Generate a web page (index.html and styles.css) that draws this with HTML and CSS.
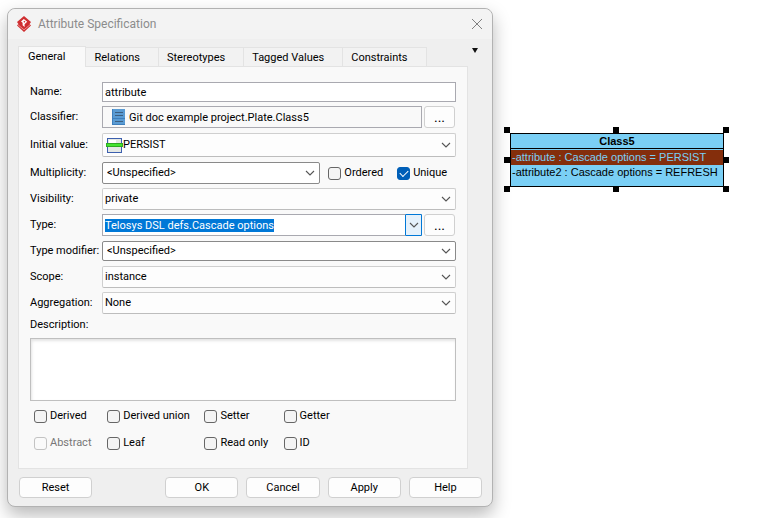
FILE: index.html
```html
<!DOCTYPE html>
<html lang="en">
<head>
<meta charset="utf-8">
<title>Attribute Specification</title>
<link rel="stylesheet" href="styles.css">
</head>
<body>
<svg class="defs" aria-hidden="true">
  <symbol id="chevron" viewBox="0 0 10 6"><path d="M1 1 L5 5 L9 1" fill="none" stroke="#555" stroke-width="1.1"/></symbol>
</svg>
<main class="workspace">
  <section class="dialog" role="dialog" aria-labelledby="dialog-title">
    <header class="titlebar">
      <svg class="app-icon" viewBox="0 0 14 16" aria-hidden="true">
        <path d="M7 0 L14 6 L12.6 8 L14 9.6 L7 16 L0 9.6 L1.4 8 L0 6 Z" fill="#cf2f31"/>
        <path d="M1 8.8 L7 13.8 L13 8.8" fill="none" stroke="#f3b5b5" stroke-width="0.7"/>
        <path d="M4 5.4 L6.8 3 L10.2 5.8 L7.6 8.2 L7.6 11 L5.6 9.2 L5.6 6.8 Z" fill="#fff"/>
        <path d="M6.4 5.8 L7.4 4.8 L8.4 5.8 L7.4 6.8 Z" fill="#cf2f31"/>
      </svg>
      <h1 id="dialog-title" class="title">Attribute Specification</h1>
      <button class="close" type="button" aria-label="Close"><svg viewBox="0 0 10 10"><path d="M0 0 L10 10 M10 0 L0 10" stroke="#808080" fill="none"/></svg></button>
    </header>
    <form class="content">
      <nav class="tabs">
        <button type="button" class="tab tab-active">General</button>
        <button type="button" class="tab">Relations</button>
        <button type="button" class="tab">Stereotypes</button>
        <button type="button" class="tab">Tagged Values</button>
        <button type="button" class="tab">Constraints</button>
        <button type="button" class="tab-menu" aria-label="Tab list"><svg viewBox="0 0 6 5"><path d="M0 0 H6 L3 5 Z" fill="#111"/></svg></button>
      </nav>
      <div class="panel">
        <div class="fields">
          <label for="name">Name:</label>
          <input id="name" class="box short" type="text" value="attribute">

          <label for="classifier">Classifier:</label>
          <div class="line">
            <span class="picker">
              <svg class="class-icon" viewBox="0 0 13 16" aria-hidden="true"><rect width="13" height="16" fill="#5a9bd3"/><path d="M.5 0 V16 M0 15.5 H13 M0 9.5 H13" stroke="#3d7fbd"/><path d="M3 3.5 H11 M3 6.5 H11 M3 12.5 H11" stroke="#3d5f80"/></svg>
              <input id="classifier" class="box readonly" type="text" readonly value="Git doc example project.Plate.Class5">
            </span>
            <button type="button" class="more" aria-label="Choose classifier">...</button>
          </div>

          <label for="initial">Initial value:</label>
          <span class="combo tall soft">
            <svg class="value-icon" viewBox="0 0 17 15" aria-hidden="true"><rect x="1.5" y=".5" width="14" height="14" fill="#e4e8e4" stroke="#3c5fae"/><rect x="3" y="2" width="7" height="4" fill="#fff"/><rect x=".5" y="5.5" width="16" height="3" fill="#43e52e" stroke="#2fa823"/></svg>
            <select id="initial" class="with-icon"><option>PERSIST</option></select>
            <svg class="chevron"><use href="#chevron"/></svg>
          </span>

          <label for="multiplicity">Multiplicity:</label>
          <div class="line">
            <span class="combo half strong"><select id="multiplicity"><option>&lt;Unspecified&gt;</option></select><svg class="chevron"><use href="#chevron"/></svg></span>
            <label class="check ordered"><input type="checkbox">Ordered</label>
            <label class="check unique"><input type="checkbox" checked>Unique</label>
          </div>

          <label for="visibility">Visibility:</label>
          <span class="combo soft"><select id="visibility"><option>private</option></select><svg class="chevron"><use href="#chevron"/></svg></span>

          <label for="type">Type:</label>
          <div class="line">
            <span class="editable">
              <input id="type" class="box" type="text" value="Telosys DSL defs.Cascade options" spellcheck="false">
              <button type="button" class="drop" aria-label="Show types"><svg class="drop-icon"><use href="#chevron"/></svg></button>
            </span>
            <button type="button" class="more" aria-label="Choose type">...</button>
          </div>

          <label for="modifier">Type modifier:</label>
          <span class="combo short strong"><select id="modifier"><option>&lt;Unspecified&gt;</option></select><svg class="chevron"><use href="#chevron"/></svg></span>

          <label for="scope">Scope:</label>
          <span class="combo soft"><select id="scope"><option>instance</option></select><svg class="chevron"><use href="#chevron"/></svg></span>

          <label for="aggregation">Aggregation:</label>
          <span class="combo soft"><select id="aggregation"><option>None</option></select><svg class="chevron"><use href="#chevron"/></svg></span>
        </div>
        <label class="description-label" for="description">Description:</label>
        <textarea id="description" class="description"></textarea>
        <div class="flags">
          <label class="check"><input type="checkbox">Derived</label>
          <label class="check"><input type="checkbox">Derived union</label>
          <label class="check"><input type="checkbox">Setter</label>
          <label class="check"><input type="checkbox">Getter</label>
          <label class="check check-disabled"><input type="checkbox" disabled>Abstract</label>
          <label class="check"><input type="checkbox">Leaf</label>
          <label class="check"><input type="checkbox">Read only</label>
          <label class="check"><input type="checkbox">ID</label>
        </div>
      </div>
      <footer class="actions">
        <button type="button" class="reset">Reset</button>
        <button type="button">OK</button>
        <button type="button">Cancel</button>
        <button type="button">Apply</button>
        <button type="button">Help</button>
      </footer>
    </form>
  </section>
  <section class="canvas" aria-label="Class diagram">
    <article class="uml-class">
      <h2>Class5</h2>
      <ul>
        <li class="selected">-attribute : Cascade options = PERSIST</li>
        <li>-attribute2 : Cascade options = REFRESH</li>
      </ul>
      <i class="handle top left"></i><i class="handle top center"></i><i class="handle top right"></i>
      <i class="handle middle left"></i><i class="handle middle right"></i>
      <i class="handle bottom left"></i><i class="handle bottom center"></i><i class="handle bottom right"></i>
    </article>
  </section>
</main>
<script src="app.js"></script>
</body>
</html>
```
FILE: styles.css
```css
* { box-sizing: border-box; }

body {
  margin: 0;
  background: #fff;
  color: #000;
  font: 11px/14px Tahoma, Roboto, "Open Sans", sans-serif;
}

button, input, select, textarea {
  font: inherit;
  color: inherit;
  margin: 0;
  outline: none;
}

button { padding: 0; }
.defs { position: absolute; width: 0; height: 0; }

.workspace {
  display: grid;
  grid-template-columns: 486fr 268fr;
  align-items: start;
  min-height: 100vh;
  padding: 8px 8px 8px 7px;
  overflow: hidden;
}

.dialog {
  border: 1px solid #b2b2b2;
  border-radius: 8px;
  background: #efefef;
  box-shadow: 0 8px 18px rgba(0, 0, 0, .28);
}

.titlebar {
  display: flex;
  align-items: center;
  height: 30px;
  padding: 0 10px 0 9px;
  border-radius: 8px 8px 0 0;
  background: #f3f3f3;
}
.app-icon { width: 14px; height: 16px; }
.title { flex: 1; margin: 0 7px; font-size: 12px; font-weight: 400; color: #8c8c8c; }
.close { display: grid; border: 0; background: none; }
.close svg { width: 10px; height: 10px; }

.content { padding: 7px 24px 8px 10px; }

.tabs { display: flex; align-items: flex-end; }
.tab {
  height: 19px;
  padding: 1px 18px 0 8px;
  border: 1px solid #e3e3e3;
  border-width: 1px 1px 0 0;
  background: #f2f2f2;
}
.tab-active {
  height: 21px;
  margin-bottom: -1px;
  padding: 0 20px 1px 9px;
  border-left-width: 1px;
  background: #f9f9f9;
  position: relative;
}
.tab-menu {
  display: grid;
  align-self: flex-start;
  margin: 2px -10px 0 auto;
  border: 0;
  background: none;
}
.tab-menu svg { width: 6px; height: 5px; }

.panel {
  padding: 15px 11px 18px;
  border: 1px solid #e3e3e3;
  background: #f9f9f9;
}

.fields {
  display: grid;
  grid-template-columns: 72px 1fr;
  grid-template-rows: 20px 22px 26px repeat(6, 22px);
  row-gap: 4px;
  align-items: center;
}
.fields > label { white-space: nowrap; }
.line { display: flex; align-items: center; gap: 2px; padding-right: 1px; }

.box {
  width: 100%;
  height: 22px;
  padding: 0 2px;
  border: 1px solid #a9a9b0;
  background: #fff;
}
.box.short, .combo.short { height: 20px; }
.box.readonly { padding-left: 26px; background: #f9f9f9; }

.picker, .editable, .combo { position: relative; display: flex; flex: 1; }
.class-icon { position: absolute; top: 3px; left: 10px; width: 13px; height: 16px; }
.value-icon { position: absolute; top: 4px; left: 3px; width: 17px; height: 15px; }

.more {
  width: 31px;
  height: 22px;
  border: 1px solid #d0d0d0;
  border-radius: 3px;
  background: #fdfdfd;
  font-size: 14px;
}

.combo {
  align-items: center;
  height: 22px;
  border: 1px solid #8a8a8a;
  border-radius: 2px;
  background: #fff;
}
.combo.soft { border-color: #cfcfcf #cfcfcf #bdbdbd; background: #fdfdfd; }
.combo.tall { height: 24px; }
.combo.half { flex: 217 1 0; }
.combo select {
  appearance: none;
  width: 100%;
  height: 100%;
  padding: 0 20px 0 2px;
  border: 0;
  background: none;
}
.combo.strong select { padding-left: 4px; }
.combo select.with-icon { padding-left: 20px; }
.chevron {
  position: absolute;
  right: 4px;
  width: 10px;
  height: 6px;
  pointer-events: none;
}

.drop {
  position: absolute;
  top: 0;
  right: 0;
  display: grid;
  place-items: center;
  width: 17px;
  height: 22px;
  border: 1px solid #0078d7;
  border-radius: 1px;
  background: #e5f1fb;
}
.drop-icon { width: 10px; height: 6px; }
#type::selection { background: #0078d7; color: #fff; }

.check { display: flex; align-items: center; gap: 3px; white-space: nowrap; }
.line .ordered { flex: 67 1 0; margin-left: 6px; }
.line .unique { flex: 58 1 0; }
.check input {
  appearance: none;
  display: grid;
  place-items: center;
  flex: none;
  width: 13px;
  height: 13px;
  border: 1px solid #666;
  border-radius: 3px;
  background: #f4f4f4;
}
.check input:checked { border-color: #005fb8; background: #005fb8; }
.check input:checked::before {
  content: "";
  width: 7px;
  height: 4px;
  margin-bottom: 2px;
  border: solid #fff;
  border-width: 0 0 1px 1px;
  rotate: -45deg;
}
.check input:disabled { border-color: #c3c3c3; background: #fafafa; }
.check-disabled { color: #777; }

.description-label { display: block; margin: 4px 0 6px; }
.description {
  display: block;
  width: 100%;
  height: 63px;
  border: 1px solid #bfbfbf;
  background: #fff;
  box-shadow: inset 1px 2px 3px #e4e4e4;
  resize: none;
}

.flags {
  display: grid;
  grid-template-columns: 73fr 97fr 79fr 172fr;
  row-gap: 13px;
  padding: 8px 0 0 4px;
}

.actions { display: flex; gap: 8px; margin: 0 -14px 0 1px; padding-top: 8px; }
.actions button {
  flex: 73 1 0;
  height: 21px;
  border: 1px solid #d0d0d0;
  border-radius: 4px;
  background: #fdfdfd;
}
.actions .reset { margin-right: 65px; }

.canvas { padding: 125px 37px 0 17px; }
.uml-class {
  position: relative;
  padding-bottom: 6px;
  border: 1px solid #000;
  background: #7acff5;
  font: 11px/15px "Liberation Sans", Arial, sans-serif;
}
.uml-class h2 {
  margin: 0 0 1px;
  border-bottom: 1px solid #000;
  font-size: 11px;
  line-height: 14px;
  text-align: center;
}
.uml-class ul { margin: 0; padding: 0; list-style: none; }
.uml-class li { padding-left: 1px; white-space: nowrap; }
.uml-class .selected { background: #842e0c; color: #7acff5; }

.handle { position: absolute; width: 6px; height: 6px; background: #000; }
.top { top: -7px; }
.middle { top: calc(50% - 3px); }
.bottom { bottom: -6px; }
.left { left: -7px; }
.center { left: calc(50% - 4px); }
.right { right: -6px; }
```
FILE: app.js
```js
const typeField = document.getElementById("type");
typeField.focus();
typeField.select();
```
